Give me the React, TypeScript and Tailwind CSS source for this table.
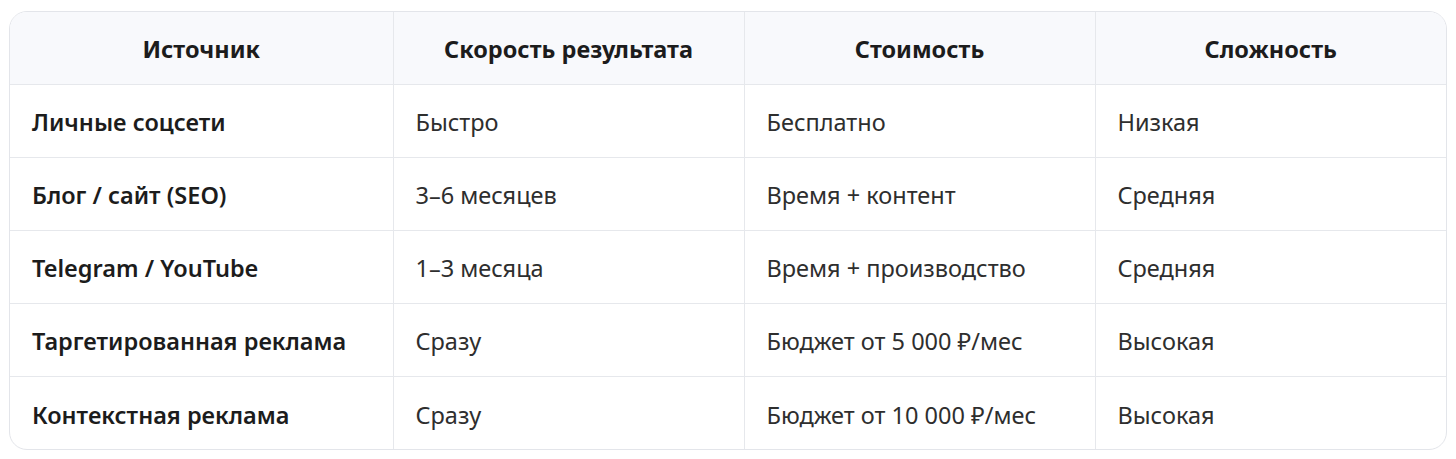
import React from 'react';

const HEADERS = ["Источник", "Скорость результата", "Стоимость", "Сложность"];

const ROWS = [
  ["Личные соцсети", "Быстро", "Бесплатно", "Низкая"],
  ["Блог / сайт (SEO)", "3–6 месяцев", "Время + контент", "Средняя"],
  ["Telegram / YouTube", "1–3 месяца", "Время + производство", "Средняя"],
  ["Таргетированная реклама", "Сразу", "Бюджет от 5 000 ₽/мес", "Высокая"],
  ["Контекстная реклама", "Сразу", "Бюджет от 10 000 ₽/мес", "Высокая"],
];

export default function App() {
  return (
    <div className="w-[1456px] h-[459px] bg-white pt-[11px] pl-[9px] pr-[9px] font-['Noto_Sans',sans-serif]">
      <div className="rounded-[18px] border border-[#e3e5ea] overflow-hidden">
        <table className="w-full border-collapse table-fixed">
          <colgroup>
            <col className="w-[383px]" />
            <col className="w-[351px]" />
            <col className="w-[351px]" />
            <col />
          </colgroup>
          <thead>
            <tr className="bg-[#f8f9fc] h-[72px]">
              {HEADERS.map((h, i) => (
                <th
                  key={h}
                  className={`text-center text-[23.5px] font-bold text-[#1c1c1c] pt-[4px] ${i > 0 ? 'border-l border-[#e6e8ec]' : ''}`}
                >
                  {h}
                </th>
              ))}
            </tr>
          </thead>
          <tbody>
            {ROWS.map((row, r) => (
              <tr key={r} className="h-[73px] border-t border-[#e6e8ec]">
                {row.map((cell, i) => (
                  <td
                    key={i}
                    className={`px-[22px] pt-[5px] text-[23.5px] ${i === 0 ? 'font-semibold text-[#1c1c1c]' : 'font-normal text-[#2e2e2e]'} ${i > 0 ? 'border-l border-[#e6e8ec]' : ''}`}
                  >
                    {cell}
                  </td>
                ))}
              </tr>
            ))}
          </tbody>
        </table>
      </div>
    </div>
  );
}
